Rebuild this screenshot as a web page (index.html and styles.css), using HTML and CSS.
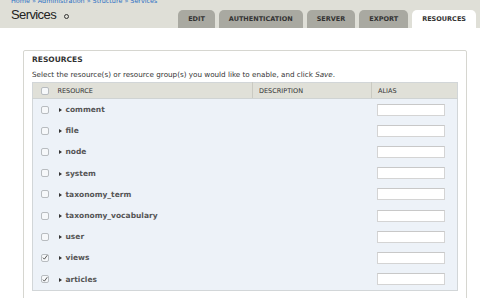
FILE: index.html
```html
<!DOCTYPE html>
<html lang="en">
<head>
    <meta charset="UTF-8">
    <title>Services</title>
    <link rel="stylesheet" href="styles.css">
</head>
<body>
<div class="header">
    <div class="title-block">
        <div class="breadcrumb"><a href="#">Home</a> » <a href="#">Administration</a> » <a href="#">Structure</a> » <a href="#">Services</a></div>
        <h1>Services <span class="ring"></span></h1>
    </div>
    <ul class="tabs">
        <li><a href="#">Edit</a></li>
        <li><a href="#">Authentication</a></li>
        <li><a href="#">Server</a></li>
        <li><a href="#">Export</a></li>
        <li class="active"><a href="#">Resources</a></li>
    </ul>
</div>

<div class="content">
    <fieldset>
        <div class="legend">Resources</div>
        <p class="help">Select the resource(s) or resource group(s) you would like to enable, and click <em>Save</em>.</p>
        <table>
            <colgroup>
                <col class="c-select">
                <col class="c-name">
                <col class="c-desc">
                <col>
            </colgroup>
            <thead>
                <tr>
                    <th class="select"><span class="cb"></span></th>
                    <th class="name">Resource</th>
                    <th class="desc">Description</th>
                    <th class="alias">Alias</th>
                </tr>
            </thead>
            <tbody id="rows"></tbody>
        </table>
    </fieldset>
</div>

<script>
    const resources = [
        ["comment", false], ["file", false], ["node", false], ["system", false],
        ["taxonomy_term", false], ["taxonomy_vocabulary", false], ["user", false],
        ["views", true], ["articles", true]
    ];
    const tbody = document.getElementById("rows");
    resources.forEach(function (r) {
        const tr = document.createElement("tr");
        tr.innerHTML =
            '<td class="select"><span class="cb' + (r[1] ? ' checked' : '') + '">' +
            (r[1] ? '<svg viewBox="0 0 8 8" width="7" height="7"><path d="M1.2 4.2 L3.2 6.2 L7 1" fill="none" stroke="#444" stroke-width="1.2"/></svg>' : '') +
            '</span></td>' +
            '<td class="name"><span class="arrow"></span>' + r[0] + '</td>' +
            '<td class="desc"></td>' +
            '<td class="alias"><input type="text"></td>';
        tbody.appendChild(tr);
    });
</script>
</body>
</html>
```

FILE: styles.css
```css
body {
    margin: 0;
    background-color: #ffffff;
    font-family: "DejaVu Sans", Verdana, sans-serif;
    color: #333;
    overflow: hidden;
}
a {
    color: #2a6fc4;
    text-decoration: none;
}
.header {
    display: flex;
    justify-content: space-between;
    align-items: flex-end;
    height: 28px;
    padding: 0 4px 0 11px;
    background-color: #dfdfd7;
}
.title-block {
    align-self: stretch;
}
.breadcrumb {
    font-size: 6.4px;
    line-height: 8px;
    margin-top: -3px;
    white-space: nowrap;
    color: #2a6fc4;
}
h1 {
    margin: 2px 0 0 0;
    font-family: "Liberation Sans", Arial, sans-serif;
    font-size: 13px;
    line-height: 16px;
    letter-spacing: -0.6px;
    font-weight: normal;
    color: #222;
    display: flex;
    align-items: center;
}
.ring {
    display: inline-block;
    width: 3px;
    height: 3px;
    border: 1.5px solid #333;
    border-radius: 50%;
    margin-left: 8px;
    margin-top: 3px;
}
.tabs {
    display: flex;
    gap: 4px;
    margin: 0;
    padding: 0;
    list-style: none;
}
.tabs li a {
    display: block;
    height: 18px;
    line-height: 19px;
    padding: 0 10px;
    background-color: #a9a9a1;
    border-radius: 5px 5px 0 0;
    color: #333;
    font-size: 6.5px;
    font-weight: bold;
    text-transform: uppercase;
}
.tabs li.active a {
    background-color: #ffffff;
}
.content {
    padding: 22px 13px 0 23px;
}
fieldset {
    margin: 0;
    padding: 4px 8px 12px 8px;
    border: 1px solid #d6d6d0;
    border-radius: 2px;
}
.legend {
    font-size: 7.5px;
    font-weight: bold;
    text-transform: uppercase;
    color: #333;
    line-height: 10px;
}
.help {
    margin: 5px 0 2px 0;
    font-size: 7.2px;
    line-height: 10px;
    color: #333;
}
table {
    width: 100%;
    table-layout: fixed;
    border-collapse: collapse;
    border: 1px solid #d2d6d8;
}
.c-select {
    width: 20px;
}
.c-name {
    width: 200px;
}
.c-desc {
    width: 119px;
}
th {
    height: 15px;
    padding: 0;
    background-color: #e0e0d8;
    text-align: left;
    font-size: 6.5px;
    font-weight: normal;
    text-transform: uppercase;
    color: #333;
    border-bottom: 1px solid #cfd3d3;
}
th.desc, th.alias {
    border-left: 1px solid #cacac2;
    padding-left: 6px;
}
th.name {
    padding-left: 5px;
}
td {
    height: 21.2px;
    padding: 0;
    background-color: #edf2f8;
    font-size: 7.5px;
    font-weight: bold;
    color: #555;
}
.select {
    padding-left: 8px;
}
td.name {
    padding-left: 5px;
}
.cb {
    display: flex;
    align-items: center;
    justify-content: center;
    width: 6px;
    height: 6px;
    border: 1px solid #b8bcc0;
    border-radius: 2px;
    background-color: #f6f8fa;
}
.arrow {
    display: inline-block;
    width: 0;
    height: 0;
    border-top: 2px solid transparent;
    border-bottom: 2px solid transparent;
    border-left: 3px solid #333;
    margin: 0 4px 0 1px;
}
td.alias {
    padding-left: 5px;
}
td.alias input {
    display: block;
    width: 68px;
    height: 12px;
    padding: 0;
    border: 1px solid #d4d4d4;
    border-top-color: #c8c8c8;
    background-color: #ffffff;
    box-sizing: border-box;
}
```
